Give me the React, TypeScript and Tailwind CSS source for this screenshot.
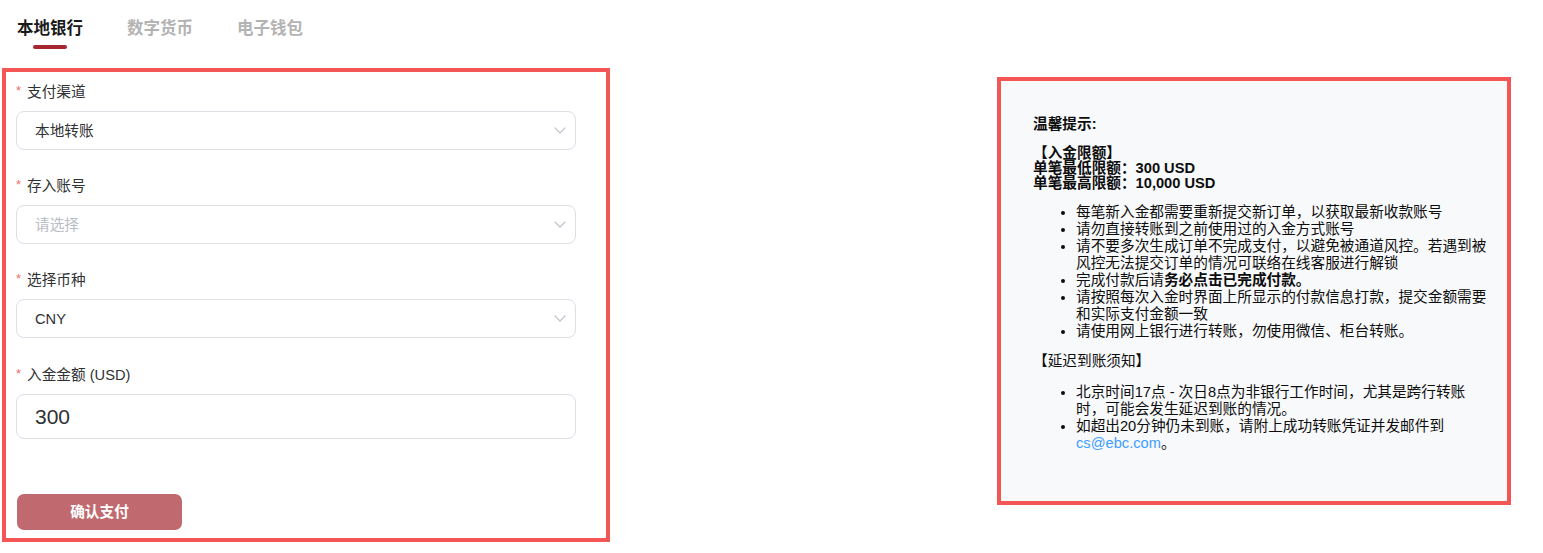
import React from 'react';

const font = { fontFamily: '"Liberation Sans", "Noto Sans CJK SC", sans-serif' };

const tabs = ['本地银行', '数字货币', '电子钱包'];

const Chevron = () => (
  <svg width="12" height="7" viewBox="0 0 12 7" fill="none" className="shrink-0">
    <polyline points="1,1 6,6 11,1" stroke="#c0c4cc" strokeWidth="1.2" strokeLinecap="round" strokeLinejoin="round" />
  </svg>
);

const Label = ({ text }: { text: string }) => (
  <div className="flex items-center h-[20px] mb-[9px] text-[14.67px] text-[#303133]">
    <span className="w-[11px] text-[#f56c6c] text-[13px] leading-none -mt-[4px]">*</span>
    <span>{text}</span>
  </div>
);

const SelectBox = ({ value, placeholder }: { value?: string; placeholder?: string }) => (
  <div className="flex items-center justify-between h-[39px] w-[560px] pl-[18px] pr-[9px] rounded-[8px] border border-[#dcdfe6] bg-white">
    {value ? (
      <span className="text-[14.67px] text-[#303133]">{value}</span>
    ) : (
      <span className="text-[14.67px] text-[#b8bcc4]">{placeholder}</span>
    )}
    <Chevron />
  </div>
);

const DepositForm = () => (
  <div className="w-[608px] h-[474px] ml-[2px] border-[4px] border-[#f45656] pl-[10px] pr-[30px] pt-[10px] flex flex-col">
    <Label text="支付渠道" />
    <SelectBox value="本地转账" />
    <div className="h-[26px]" />
    <Label text="存入账号" />
    <SelectBox placeholder="请选择" />
    <div className="h-[26px]" />
    <Label text="选择币种" />
    <SelectBox value="CNY" />
    <div className="h-[27px]" />
    <Label text="入金金额 (USD)" />
    <div className="flex items-center h-[45px] w-[560px] pl-[18px] rounded-[8px] border border-[#dcdfe6] bg-white">
      <span className="text-[21px] text-[#303133]">300</span>
    </div>
    <button className="mt-[55px] ml-[1px] w-[165px] h-[36px] rounded-[7px] bg-[#c06a70] text-white text-[14.67px] font-bold">
      确认支付
    </button>
  </div>
);

const Notice = () => (
  <div className="w-[514px] h-[428px] ml-auto mr-[32px] mt-[9px] border-[4px] border-[#f45656] bg-[#f8f9fb] pt-[35px] pl-[32px] pr-[18px] text-[14.67px] text-[#0d0d0d]">
    <p className="leading-[17px] font-semibold">温馨提示:</p>
    <div className="mt-[13px] font-bold leading-[15px]">
      <p>【入金限额】</p>
      <p>单笔最低限额：300 USD</p>
      <p>单笔最高限额：10,000 USD</p>
    </div>
    <ul className="mt-[13px] list-disc pl-[43px] leading-[17px]">
      <li>每笔新入金都需要重新提交新订单，以获取最新收款账号</li>
      <li>请勿直接转账到之前使用过的入金方式账号</li>
      <li>请不要多次生成订单不完成支付，以避免被通道风控。若遇到被风控无法提交订单的情况可联络在线客服进行解锁</li>
      <li>
        完成付款后请<span className="font-bold">务必点击已完成付款。</span>
      </li>
      <li>请按照每次入金时界面上所显示的付款信息打款，提交金额需要和实际支付金额一致</li>
      <li>请使用网上银行进行转账，勿使用微信、柜台转账。</li>
    </ul>
    <p className="mt-[13px] leading-[17px]">【延迟到账须知】</p>
    <ul className="mt-[14px] list-disc pl-[43px] leading-[17px]">
      <li>北京时间17点 - 次日8点为非银行工作时间，尤其是跨行转账时，可能会发生延迟到账的情况。</li>
      <li>
        如超出20分钟仍未到账，请附上成功转账凭证并发邮件到
        <span className="text-[#409eff]">cs@ebc.com</span>。
      </li>
    </ul>
  </div>
);

export default function App() {
  return (
    <div className="w-[1543px] h-[553px] bg-white overflow-hidden" style={font}>
      {/* tab bar */}
      <div className="flex items-start gap-[44px] pl-[17px] pt-[17px]">
        {tabs.map((t, i) => (
          <div key={t} className="flex flex-col items-center">
            <span
              className={
                i === 0
                  ? 'text-[16.5px] leading-[23px] font-bold text-[#1a1a1a]'
                  : 'text-[16.5px] leading-[23px] font-bold text-[#b3b3b3]'
              }
            >
              {t}
            </span>
            {i === 0 ? (
              <div className="mt-[5px] w-[34px] h-[4px] rounded-full bg-[#a8262f]" />
            ) : (
              <div className="mt-[5px] h-[4px]" />
            )}
          </div>
        ))}
      </div>

      <div className="flex items-start mt-[19px]">
        <DepositForm />
        <Notice />
      </div>
    </div>
  );
}
